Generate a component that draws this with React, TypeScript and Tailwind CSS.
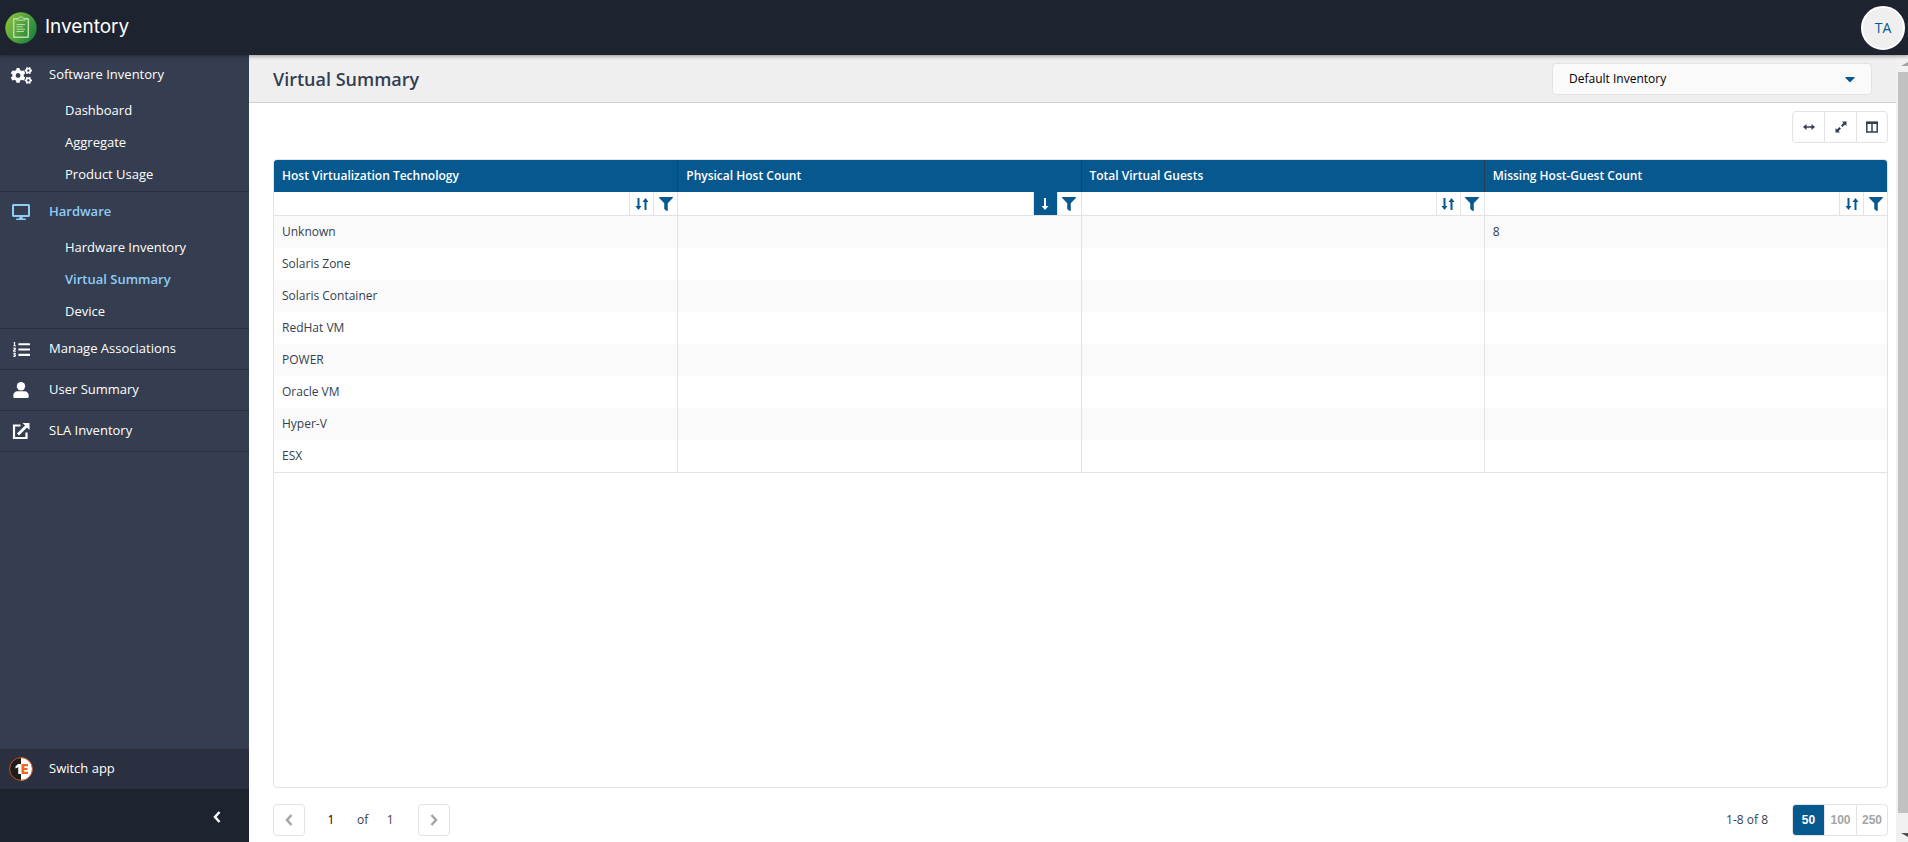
import { useState, type ReactNode } from "react";
import { FaCogs, FaDesktop, FaListOl, FaFilter, FaCaretDown } from "react-icons/fa";

type Group = { label: string; icon: ReactNode; active?: boolean; items?: { label: string; active?: boolean }[] };

function UserIcon() {
  return (
    <svg viewBox="0 0 16 16" className="size-4" fill="currentColor" aria-hidden="true">
      <circle cx="8" cy="4.200" r="4.200" />
      <path d="M4.500 9.300h7A4 4 0 0 1 15.700 13.300V14.500A1.500 1.500 0 0 1 14.200 16H1.800A1.500 1.500 0 0 1 .3 14.500V13.300A4 4 0 0 1 4.500 9.300z" />
    </svg>
  );
}

function ExternalIcon() {
  return (
    <svg viewBox="0 0 18 18" className="size-[18px]" fill="none" stroke="currentColor" aria-hidden="true">
      <path d="M8.500 3.500H2V16h12.500v-5.500" strokeWidth="2.200" />
      <path d="M6 12.500 14.500 4" strokeWidth="2.800" />
      <path d="M10.500 1H17.500V8Z" fill="currentColor" stroke="none" />
    </svg>
  );
}

function SortIcon() {
  return (
    <svg viewBox="0 0 14 14" className="h-3.5 w-3.5" fill="currentColor" aria-hidden="true">
      <path d="M2.500 1h2v8h2l-3 4-3-4h2zM9.500 13h2V5h2l-3-4-3 4h2z" />
    </svg>
  );
}

function DownIcon() {
  return (
    <svg viewBox="0 0 8 14" className="h-3.5 w-2" fill="currentColor" aria-hidden="true">
      <path d="M3 1h2v8h2.500L4 13 .5 9H3z" />
    </svg>
  );
}

function WidthIcon() {
  return (
    <svg viewBox="0 0 12 8" className="h-2 w-3" fill="currentColor" aria-hidden="true">
      <path d="M0 4 3.500 1v2.200h5V1L12 4 8.500 7V4.800h-5V7z" />
    </svg>
  );
}

function ExpandIcon() {
  return (
    <svg viewBox="0 0 12 12" className="size-3" aria-hidden="true">
      <path
        d="M7 .5h4.500V5L10 3.600 7.500 6 6 4.500 8.400 2zM5 11.500H.5V7L2 8.400 4.300 6 6 7.600 3.600 10z"
        fill="currentColor"
      />
    </svg>
  );
}

function ColumnsIcon() {
  return (
    <svg viewBox="0 0 12 12" className="size-3" aria-hidden="true">
      <path d="M.8 1.500H11.200V11H.8zM6 2v9" fill="none" stroke="currentColor" strokeWidth="1.500" />
      <path d="M0 .5h12v2.500H0z" fill="currentColor" />
    </svg>
  );
}

function Chevron({ dir, className }: { dir: "left" | "right"; className: string }) {
  return (
    <svg viewBox="0 0 8 12" className={className} fill="none" stroke="currentColor" strokeWidth="2.500" aria-hidden="true">
      <path d={dir === "left" ? "M6.500 1 2 6l4.500 5" : "M1.500 1 6 6l-4.500 5"} />
    </svg>
  );
}

function InventoryLogo() {
  return (
    <svg viewBox="0 0 32 32" className="size-8" fill="none" aria-hidden="true">
      <defs>
        <linearGradient id="leaf" x1="0" y1="0.2" x2="1" y2="0.8">
          <stop offset="0" stopColor="#8cc23c" />
          <stop offset="1" stopColor="#17803c" />
        </linearGradient>
      </defs>
      <circle cx="16" cy="16" r="15.700" fill="url(#leaf)" />
      <rect x="8.700" y="6.700" width="14.600" height="18.600" rx="0.500" stroke="#b9dda8" strokeWidth="1.500" />
      <path d="M12 8.200V6.300h2.200a1.800 1.500 0 0 1 3.600 0H20v1.900z" fill="#5fa845" stroke="#b9dda8" />
      <path d="M11.500 12.500h8.500M11.500 14.800h6.500M11.500 17.200h8.500M11.500 19.500h7.500" stroke="#b9dda8" strokeWidth="1.100" />
    </svg>
  );
}

function SwitchLogo() {
  return (
    <svg viewBox="0 0 24 24" className="size-6" aria-hidden="true">
      <circle cx="12" cy="12" r="11.500" fill="#1d1d1b" />
      <path d="M12 .5a11.500 11.500 0 0 1 0 23z" fill="#fff" />
      <circle cx="12" cy="12" r="11.400" fill="none" stroke="#c4532a" strokeWidth="1" />
      <path d="M6.500 9.300 9.200 7H12v10H9.200v-6.800l-2.700 1.300z" fill="#fff" />
      <path d="M12.500 7H19v2.300h-3.800v1.600h3.300v2.100h-3.300v1.700H19V17h-6.500z" fill="#ee6424" />
    </svg>
  );
}

const groups: Group[] = [
  {
    label: "Software Inventory",
    icon: <FaCogs className="size-[21px]" />,
    items: [{ label: "Dashboard" }, { label: "Aggregate" }, { label: "Product Usage" }],
  },
  {
    label: "Hardware",
    active: true,
    icon: <FaDesktop className="size-[18px]" />,
    items: [{ label: "Hardware Inventory" }, { label: "Virtual Summary", active: true }, { label: "Device" }],
  },
  { label: "Manage Associations", icon: <FaListOl className="size-[17px]" /> },
  { label: "User Summary", icon: <UserIcon /> },
  { label: "SLA Inventory", icon: <ExternalIcon /> },
];

const columns = ["Host Virtualization Technology", "Physical Host Count", "Total Virtual Guests", "Missing Host-Guest Count"];
const rows = [
  ["Unknown", "", "", "8"],
  ["Solaris Zone", "", "", ""],
  ["Solaris Container", "", "", ""],
  ["RedHat VM", "", "", ""],
  ["POWER", "", "", ""],
  ["Oracle VM", "", "", ""],
  ["Hyper-V", "", "", ""],
  ["ESX", "", "", ""],
];

function Sidebar() {
  return (
    <nav aria-label="Main" className="flex w-[249px] shrink-0 flex-col bg-[#343e50] text-[13px] font-medium text-white">
      <ul>
        {groups.map((g) => (
          <li key={g.label} className="border-b border-[#272e3d]">
            <a href="#" className={`flex h-10 items-center ${g.active ? "font-semibold text-[#8ecdf8]" : ""}`}>
              <span className="flex w-[42px] shrink-0 justify-center">{g.icon}</span>
              <span className="pl-[7px]">{g.label}</span>
            </a>
            {g.items && (
              <ul>
                {g.items.map((i) => (
                  <li key={i.label}>
                    <a
                      href="#"
                      className={`flex h-8 items-center pl-[65px] ${i.active ? "font-semibold text-[#8ecdf8]" : ""}`}
                    >
                      {i.label}
                    </a>
                  </li>
                ))}
              </ul>
            )}
          </li>
        ))}
      </ul>
      <button type="button" className="mt-auto flex h-10 items-center bg-[#2a3040] text-left">
        <span className="flex w-[42px] shrink-0 justify-center">
          <SwitchLogo />
        </span>
        <span className="pl-[7px]">Switch app</span>
      </button>
      <div className="flex h-[53px] items-center justify-end bg-[#1e2330] pt-0.5 pr-7">
        <button type="button" aria-label="Collapse menu">
          <Chevron dir="left" className="h-3 w-2" />
        </button>
      </div>
    </nav>
  );
}

function Grid() {
  return (
    <div className="min-h-0 flex-1 overflow-hidden rounded border border-[#e3e3e3]">
      <table className="w-full table-fixed border-separate border-spacing-0 text-left text-xs text-[#343e50]">
        <thead>
          <tr className="h-8 bg-[#07588f] text-white">
            {columns.map((c) => (
              <th key={c} scope="col" className="border-l border-[#2b3d52] px-2 font-semibold first:border-l-0">
                {c}
              </th>
            ))}
          </tr>
          <tr className="h-6 text-[#07588f]">
            {columns.map((c, n) => (
              <td key={c} className="border-b border-l border-[#e3e3e3] p-0 first:border-l-0">
                <div className="flex h-[23px]">
                  <input aria-label={`Filter ${c}`} className="min-w-0 flex-1 px-2 outline-none" />
                  <button
                    type="button"
                    aria-label={`Sort ${c}`}
                    className={`flex w-6 items-center justify-center border-l border-[#e3e3e3] ${n === 1 ? "bg-[#07588f] text-white" : ""}`}
                  >
                    {n === 1 ? <DownIcon /> : <SortIcon />}
                  </button>
                  <button
                    type="button"
                    aria-label={`Filter options for ${c}`}
                    className="flex w-6 items-center justify-center border-l border-[#e3e3e3]"
                  >
                    <FaFilter className="size-3.5" />
                  </button>
                </div>
              </td>
            ))}
          </tr>
        </thead>
        <tbody>
          {rows.map((r) => (
            <tr key={r[0]} className="h-8 odd:bg-[#fafafa]">
              {r.map((v, n) => (
                <td key={n} className="border-l border-[#e3e3e3] px-2 first:border-l-0">
                  {v}
                </td>
              ))}
            </tr>
          ))}
        </tbody>
        <tfoot>
          <tr>
            <td colSpan={4} className="h-px bg-[#e3e3e3] p-0" />
          </tr>
        </tfoot>
      </table>
    </div>
  );
}

export default function App() {
  const [size, setSize] = useState(50);
  return (
    <div className="flex h-screen flex-col bg-white font-['Open_Sans',sans-serif]">
      <header className="relative z-10 flex h-[55px] shrink-0 items-center justify-between bg-[#1e2330] pr-[3px] pl-[5px] shadow-[0_1px_4px_rgba(0,0,0,0.4)]">
        <a href="#" className="flex items-center gap-2 font-['Inter',sans-serif] text-[19px] text-white">
          <InventoryLogo />
          Inventory
        </a>
        <button type="button" className="size-11 rounded-full border-2 border-white bg-[#efefef] text-sm text-[#07588f]">
          TA
        </button>
      </header>
      <div className="flex min-h-0 flex-1">
        <Sidebar />
        <main className="flex min-w-0 flex-1 flex-col">
          <div className="flex h-12 shrink-0 items-center justify-between border-b border-[#cfcfcf] bg-[#efefef] px-6">
            <h1 className="text-lg font-semibold text-[#343e50]">Virtual Summary</h1>
            <div className="relative w-80">
              <select
                aria-label="Inventory"
                className="h-8 w-full appearance-none rounded border border-[#e3e3e3] bg-[#fafafa] pl-4 text-xs text-black"
              >
                <option>Default Inventory</option>
              </select>
              <FaCaretDown className="pointer-events-none absolute top-2 right-3.5 size-4 text-[#07588f]" />
            </div>
          </div>
          <div className="flex min-h-0 flex-1 flex-col pr-2 pl-6">
            <div className="mt-2 mb-4 ml-auto flex shrink-0 divide-x divide-[#e3e3e3] rounded border border-[#e3e3e3] text-[#343e50]">
              <button type="button" aria-label="Fit columns" className="flex h-[30px] w-8 items-center justify-center">
                <WidthIcon />
              </button>
              <button type="button" aria-label="Expand" className="flex h-[30px] w-8 items-center justify-center">
                <ExpandIcon />
              </button>
              <button type="button" aria-label="Choose columns" className="flex h-[30px] w-[30px] items-center justify-center">
                <ColumnsIcon />
              </button>
            </div>
            <Grid />
            <div className="mt-4 mb-1.5 flex h-8 shrink-0 items-center text-xs text-[#343e50]">
              <button
                type="button"
                aria-label="Previous page"
                className="flex size-8 items-center justify-center rounded border border-[#e3e3e3] text-[#a5a5a5]"
              >
                <Chevron dir="left" className="h-3 w-2" />
              </button>
              <span className="w-[52px] text-center text-black">1</span>
              <span>of</span>
              <span className="w-[50px] pr-1.5 text-center">1</span>
              <button
                type="button"
                aria-label="Next page"
                className="flex size-8 items-center justify-center rounded border border-[#e3e3e3] text-[#a5a5a5]"
              >
                <Chevron dir="right" className="h-3 w-2" />
              </button>
              <span className="mr-6 ml-auto">1-8 of 8</span>
              <div className="flex divide-x divide-[#e3e3e3] overflow-hidden rounded border border-[#e3e3e3] font-['Liberation_Sans',sans-serif] font-bold">
                {[50, 100, 250].map((n) => (
                  <button
                    key={n}
                    type="button"
                    onClick={() => setSize(n)}
                    className={`h-[30px] w-8 last:w-[30px] ${size === n ? "bg-[#07588f] text-white" : "text-[#a5a5a5]"}`}
                  >
                    {n}
                  </button>
                ))}
              </div>
            </div>
          </div>
        </main>
        <div aria-hidden="true" className="flex w-3 shrink-0 flex-col overflow-hidden bg-[#f1f1f1] pl-0.5">
          <svg viewBox="0 0 10 17" className="h-[17px] w-2.5 shrink-0" fill="#a3a3a3">
            <path d="M3 11h7V7z" />
          </svg>
          <div className="flex-1 bg-[#c1c1c1]" />
          <svg viewBox="0 0 10 29" className="h-[29px] w-2.5 shrink-0" fill="#505050">
            <path d="M3 20h7v4z" />
          </svg>
        </div>
      </div>
    </div>
  );
}
